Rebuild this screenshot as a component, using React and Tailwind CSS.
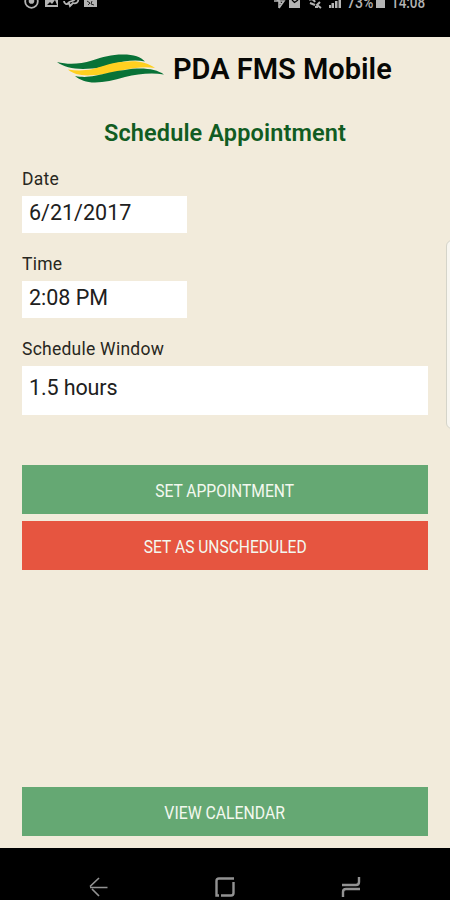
import React from "react";

function StatusBar() {
  return (
    <div className="h-[37px] shrink-0 overflow-hidden bg-black text-[#b4b4b4]">
      <div className="-mt-[7px] flex h-5 items-start justify-between pl-6 pr-[25px]">
        <svg width="76" height="20" viewBox="0 0 76 20" fill="none">
          <circle cx="7.500" cy="8.500" r="6.300" stroke="currentColor" strokeWidth="1.800" />
          <circle cx="7.500" cy="8" r="2.800" fill="currentColor" />
          <path d="M21 2h13v12H21z" fill="currentColor" />
          <path d="M23 12l3-3 2 2 3-4 2 5z" fill="#000" />
          <path
            d="M40 8c0 3 3 4 5 2l1 3 3-3c3 1 6-1 5-4M44 10c2-3 6-1 7-4"
            stroke="currentColor"
            strokeWidth="1.800"
          />
          <path d="M60 2h13v12H60z" fill="currentColor" />
          <path d="M63 8l3 2-2 2M68 8l-1 3 3 1" stroke="#000" strokeWidth=".8" />
        </svg>
        <div className="flex items-start">
          <svg width="72" height="20" viewBox="0 0 72 20" fill="none">
            <path d="M1 8h10L6 15M6 3v12M2 4l7 8" stroke="currentColor" strokeWidth="1.600" />
            <path d="M16 3h11v12H16z" fill="currentColor" />
            <path d="M19 7l2.500 2.500L25 7" stroke="#000" strokeWidth="1.300" />
            <path
              d="M36 7c3-2 5 0 6 2M37 10l5 2M42 14h3M47 9l-3 3 4 3"
              stroke="currentColor"
              strokeWidth="2"
            />
            <path
              d="M56 15v-3h2v3zM58.500 15v-5h2.500v5zM62 15V8h2.500v7zM65.500 15V3h2.500v12z"
              fill="currentColor"
            />
          </svg>
          <span className="ml-0.5 w-[27px] origin-left scale-x-[.88] text-base font-medium leading-5">
            73%
          </span>
          <span className="ml-0.5 mr-1.5 h-[15px] w-[9px] bg-current" />
          <span className="w-[34px] origin-left scale-x-[.84] text-base font-medium leading-5">
            14:08
          </span>
        </div>
      </div>
    </div>
  );
}

function Logo() {
  return (
    <svg className="mr-[9px] shrink-0" width="107" height="30" viewBox="0 0 107 30">
      <path
        d="M0 8C12 11 23 10 35 6.500C46 3 54 .500 66 .500C77 .500 84 3 88 7.500C82 6 75 6 67 7.500C56 9.500 46 14 35 14.500C20 16 8 14 0 8Z"
        fill="#087237"
      />
      <path
        d="M11 15.500C20 17 28 16.500 35 15.300C47 12 57 8 68 7.800C80 6 91 9 98 14C88 12.500 79 13.500 68 15.800C56 18.500 46 21 35 21.300C24 22 16 20 11 15.500Z"
        fill="#ffd020"
      />
      <path
        d="M18 22C26 23.500 31 23 38 21.800C48 20 57 17 68 16C85 13 99 15 107 20.500C94 18.500 81 20 68 23C57 26 47 28.500 38 28.500C29 28.500 23 26 18 22Z"
        fill="#087237"
      />
    </svg>
  );
}

function Field({ label, value, className }) {
  return (
    <div className="mb-[15px] flex flex-col">
      <label className="mb-[7px] h-[21px] pt-px text-[17.500px] leading-[21px] tracking-[.25px] text-[#282721]">
        {label}
      </label>
      <div className={`pl-[7px] text-[21.500px] text-[#202020] bg-white ${className}`}>
        {value}
      </div>
    </div>
  );
}

function ActionButton({ children, className }) {
  return (
    <button
      type="button"
      className={`flex h-[49px] w-full shrink-0 items-center justify-center pt-1 text-[19px] text-[#f3f8ef] ${className}`}>
      {children}
    </button>
  );
}

function NavBar() {
  return (
    <nav className="flex h-[52px] shrink-0 justify-between bg-black px-[89px] pt-[29px] text-[#929292]">
      <svg width="20" height="20" viewBox="0 0 20 20" fill="none" stroke="currentColor" strokeWidth="1.700">
        <path d="M10 1L1 9.500M3 12L10 19M1 10.500h17.500" />
      </svg>
      <svg width="20" height="20" viewBox="0 0 20 20" fill="none" stroke="currentColor" strokeWidth="2.400">
        <path d="M4 18.500H1.500V4q0-2.500 2.500-2.500h15M18.500 5v11q0 2.500-2.500 2.500H6" />
      </svg>
      <svg width="20" height="20" viewBox="0 0 20 20" fill="none" stroke="currentColor" strokeWidth="2.400">
        <path d="M18 0v5q0 3-3 3H1M2 20v-5q0-3 3-3h14" />
      </svg>
    </nav>
  );
}

export default function App() {
  return (
    <div className="relative flex h-[900px] w-[450px] flex-col overflow-hidden bg-[#f2ebdb] font-[Roboto,sans-serif]">
      <StatusBar />
      <main className="flex grow flex-col px-[22px]">
        <header className="flex h-[63px] items-center pl-[35px]">
          <Logo />
          <h1 className="whitespace-nowrap pt-px text-[29px] font-semibold leading-8 text-[#080805]">
            PDA FMS Mobile
          </h1>
        </header>
        <h2 className="mt-[17px] h-8 text-center text-[23.500px] font-semibold leading-8 tracking-[.12px] text-[#115c22]">
          Schedule Appointment
        </h2>
        <div className="mt-[19px]">
          <Field label="Date" value="6/21/2017" className="h-[37px] w-[165px] leading-[33px]" />
        </div>
        <div className="mt-[5px]">
          <Field label="Time" value="2:08 PM" className="h-[37px] w-[165px] leading-[33px]" />
        </div>
        <div className="mt-[5px]">
          <Field
            label="Schedule Window"
            value="1.5 hours"
            className="h-[49px] leading-[44px] tracking-[-.12px]"
          />
        </div>
        <div className="mt-[35px] flex flex-col gap-[7px]">
          <ActionButton className="bg-[#65a873]">
            <span className="scale-x-[.82]">SET APPOINTMENT</span>
          </ActionButton>
          <ActionButton className="bg-[#e65540]">
            <span className="scale-x-[.82]">SET AS UNSCHEDULED</span>
          </ActionButton>
        </div>
        <ActionButton className="mb-3 mt-auto bg-[#65a873]">
          <span className="scale-x-[.83]">VIEW CALENDAR</span>
        </ActionButton>
      </main>
      <NavBar />
      {/* edge panel handle */}
      <div className="absolute -right-2 top-[240px] h-[189px] w-3 rounded-md border border-[#d5d4c9] bg-[#f8f6f0]" />
    </div>
  );
}
